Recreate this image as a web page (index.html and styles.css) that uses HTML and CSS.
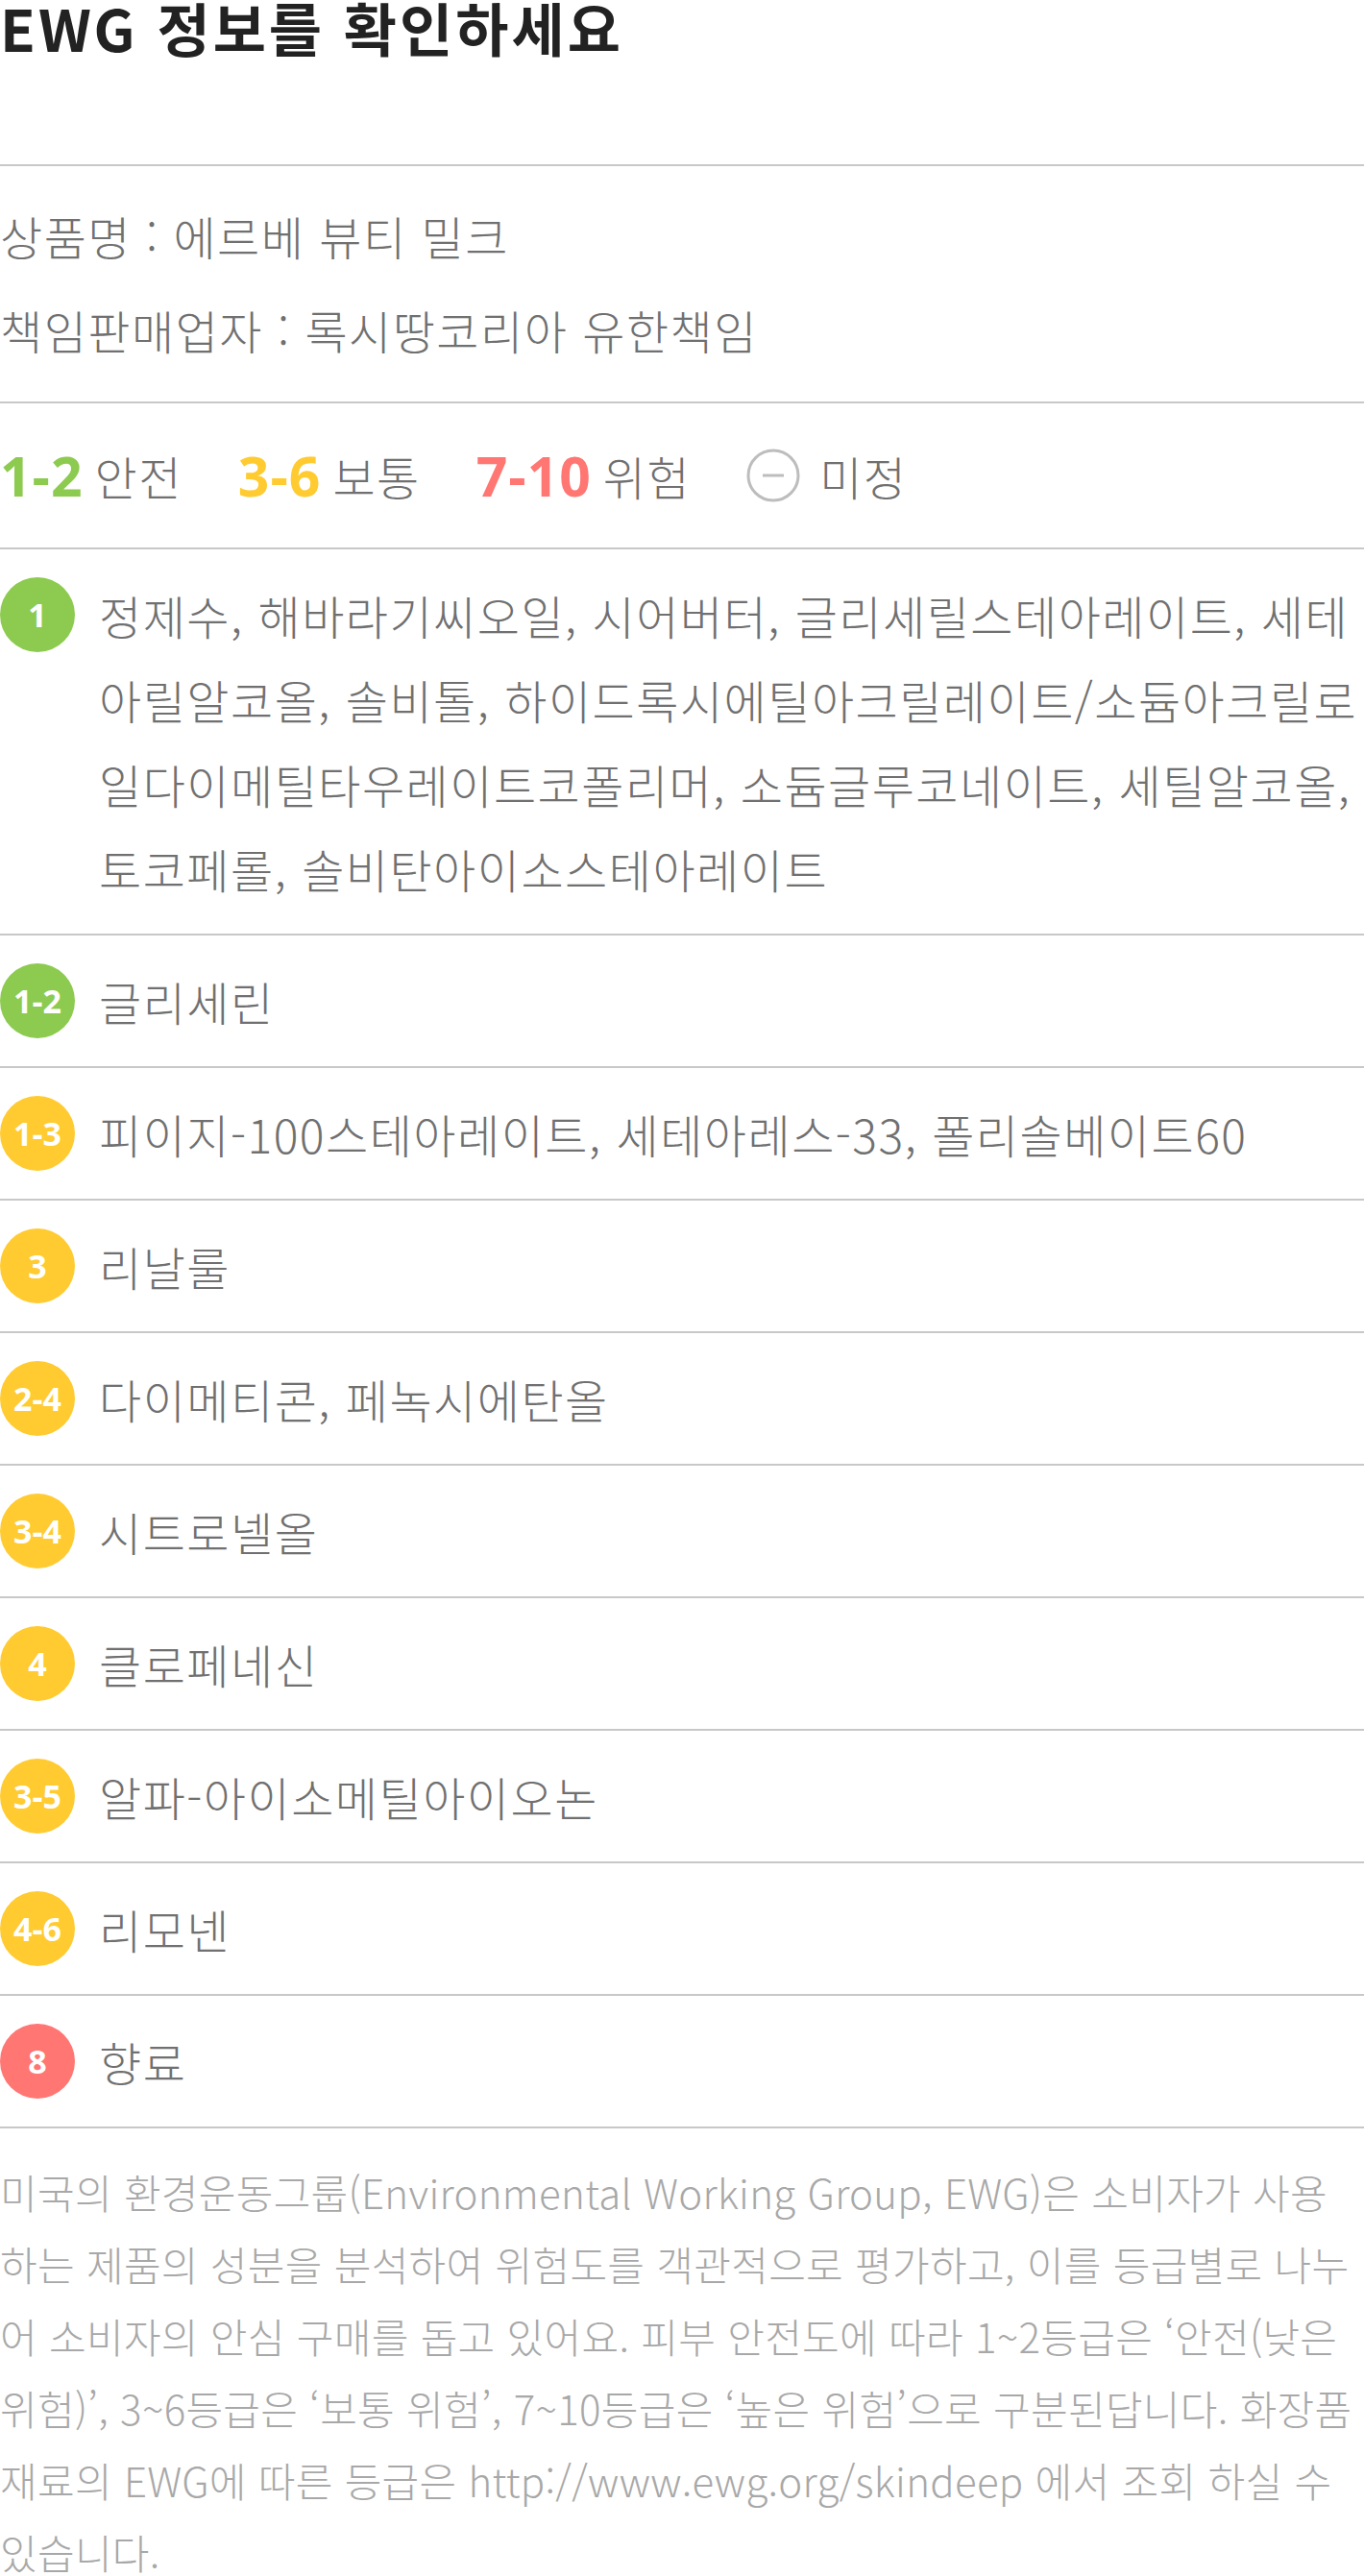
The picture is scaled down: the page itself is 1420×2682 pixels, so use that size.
FILE: index.html
```html
<!DOCTYPE html>
<html lang="ko">
<head>
<meta charset="utf-8">
<title>EWG 정보를 확인하세요</title>
<link rel="stylesheet" href="styles.css">
</head>
<body>
<div class="page">
  <h2 class="title">EWG 정보를 확인하세요</h2>

  <div class="info">
    <p>상품명 : 에르베 뷰티 밀크</p>
    <p>책임판매업자 : 록시땅코리아 유한책임</p>
  </div>

  <div class="legend">
    <div class="legend-item"><span class="num green">1-2</span><span class="label">안전</span></div>
    <div class="legend-item"><span class="num yellow">3-6</span><span class="label">보통</span></div>
    <div class="legend-item"><span class="num red">7-10</span><span class="label">위험</span></div>
    <div class="legend-item">
      <svg class="none-icon" width="56" height="56" viewBox="0 0 56 56" aria-hidden="true">
        <circle cx="28" cy="28" r="26" fill="none" stroke="#bdbdbd" stroke-width="3"/>
        <line x1="17" y1="28" x2="39" y2="28" stroke="#bdbdbd" stroke-width="3"/>
      </svg>
      <span class="label">미정</span>
    </div>
  </div>

  <ul class="ingredients">
    <li class="row"><span class="badge green-bg">1</span><p class="names">정제수, 해바라기씨오일, 시어버터, 글리세릴스테아레이트, 세테아릴알코올, 솔비톨, 하이드록시에틸아크릴레이트/소듐아크릴로일다이메틸타우레이트코폴리머, 소듐글루코네이트, 세틸알코올, 토코페롤, 솔비탄아이소스테아레이트</p></li>
    <li class="row"><span class="badge green-bg">1-2</span><p class="names">글리세린</p></li>
    <li class="row"><span class="badge yellow-bg">1-3</span><p class="names">피이지-100스테아레이트, 세테아레스-33, 폴리솔베이트60</p></li>
    <li class="row"><span class="badge yellow-bg">3</span><p class="names">리날룰</p></li>
    <li class="row"><span class="badge yellow-bg">2-4</span><p class="names">다이메티콘, 페녹시에탄올</p></li>
    <li class="row"><span class="badge yellow-bg">3-4</span><p class="names">시트로넬올</p></li>
    <li class="row"><span class="badge yellow-bg">4</span><p class="names">클로페네신</p></li>
    <li class="row"><span class="badge yellow-bg">3-5</span><p class="names">알파-아이소메틸아이오논</p></li>
    <li class="row"><span class="badge yellow-bg">4-6</span><p class="names">리모넨</p></li>
    <li class="row"><span class="badge red-bg">8</span><p class="names">향료</p></li>
  </ul>

  <p class="note">미국의 환경운동그룹(Environmental Working Group, EWG)은 소비자가 사용하는 제품의 성분을 분석하여 위험도를 객관적으로 평가하고, 이를 등급별로 나누어 소비자의 안심 구매를 돕고 있어요. 피부 안전도에 따라 1~2등급은 ‘안전(낮은 위험)’, 3~6등급은 ‘보통 위험’, 7~10등급은 ‘높은 위험’으로 구분된답니다. 화장품 재료의 EWG에 따른 등급은 http://www.ewg.org/skindeep 에서 조회 하실 수 있습니다.</p>
</div>
</body>
</html>
```

FILE: styles.css
```css
* {
  box-sizing: border-box;
}

html, body {
  margin: 0;
  padding: 0;
  background: #ffffff;
}

body {
  font-family: "Noto Sans CJK KR", "Noto Sans", sans-serif;
  color: #707070;
}

.page {
  width: 1420px;
}

.title {
  margin: 0;
  padding: 0 0 115px 0;
  font-size: 60px;
  line-height: 56px;
  font-weight: 700;
  color: #222222;
  letter-spacing: 3px;
}

.info {
  border-top: 2px solid #c8c8c8;
  padding: 23px 0 26px 0;
}

.info p {
  margin: 0;
  font-size: 48px;
  line-height: 98px;
  font-weight: 300;
  letter-spacing: 1.5px;
}

.legend {
  border-top: 2px solid #c8c8c8;
  height: 152px;
  display: flex;
  align-items: center;
  gap: 58px;
}

.legend-item {
  display: flex;
  align-items: center;
  gap: 12px;
}

.num {
  font-family: "Open Sans", "Noto Sans", sans-serif;
  font-weight: 700;
  font-size: 57px;
  line-height: 60px;
  letter-spacing: 1px;
}

.label {
  font-size: 48px;
  line-height: 60px;
  font-weight: 300;
  letter-spacing: 1.5px;
}

.green { color: #8ccb4f; }
.yellow { color: #ffcb30; }
.red { color: #ff7672; }

.none-icon {
  display: block;
  margin-right: 8px;
}

.ingredients {
  list-style: none;
  margin: 0;
  padding: 0;
}

.row {
  border-top: 2px solid #c8c8c8;
  padding: 24px 0;
  display: flex;
  align-items: flex-start;
  gap: 25px;
}

.badge {
  flex: 0 0 78px;
  width: 78px;
  height: 78px;
  margin-top: 5px;
  border-radius: 50%;
  display: flex;
  align-items: center;
  justify-content: center;
  font-family: "Open Sans", "Noto Sans", sans-serif;
  font-weight: 700;
  font-size: 34px;
  color: #ffffff;
}

.green-bg { background: #8ccb4f; }
.yellow-bg { background: #ffcb30; }
.red-bg { background: #ff7672; }

.names {
  margin: 0;
  flex: 1;
  font-size: 48px;
  line-height: 88px;
  font-weight: 300;
  letter-spacing: 1.5px;
}

.note {
  margin: 0;
  border-top: 2px solid #c8c8c8;
  padding: 28px 0 0 0;
  font-size: 42px;
  line-height: 75px;
  font-weight: 300;
  color: #a8a8a8;
  letter-spacing: 0.3px;
}
```
